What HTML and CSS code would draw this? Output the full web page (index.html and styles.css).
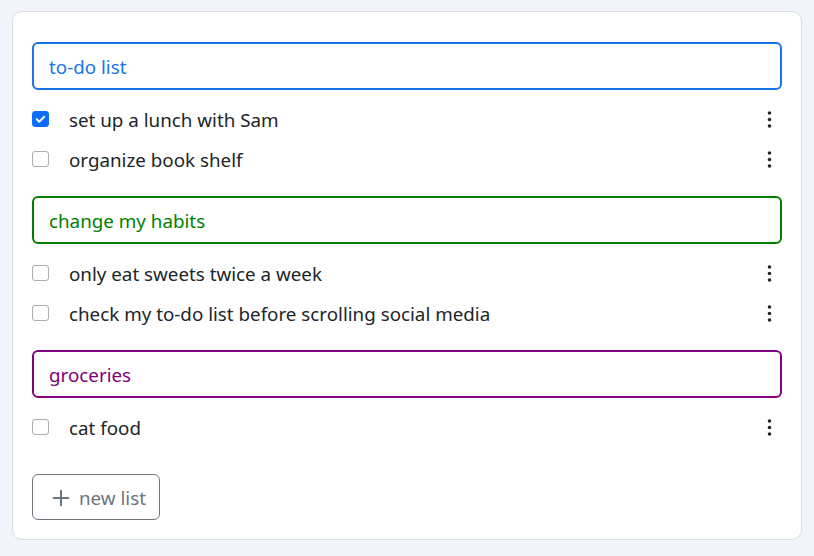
FILE: index.html
```html
<!DOCTYPE html>
<html lang="en">
<head>
<meta charset="utf-8">
<link rel="stylesheet" href="styles.css">
</head>
<body>
<div class="card">
  <section class="group">
    <div class="title title-blue">to-do list</div>
    <ul class="items">
      <li class="item"><span class="check checked"><svg viewBox="0 0 16 16" width="16" height="16"><path d="M4 8.3l2.6 2.6L12 5.6" fill="none" stroke="#fff" stroke-width="2" stroke-linecap="round" stroke-linejoin="round"/></svg></span><span class="label">set up a lunch with Sam</span><button class="kebab"><svg viewBox="0 0 16 16" width="19" height="19"><circle cx="8" cy="2.5" r="1.5"/><circle cx="8" cy="8" r="1.5"/><circle cx="8" cy="13.5" r="1.5"/></svg></button></li>
      <li class="item"><span class="check"></span><span class="label">organize book shelf</span><button class="kebab"><svg viewBox="0 0 16 16" width="19" height="19"><circle cx="8" cy="2.5" r="1.5"/><circle cx="8" cy="8" r="1.5"/><circle cx="8" cy="13.5" r="1.5"/></svg></button></li>
    </ul>
  </section>
  <section class="group">
    <div class="title title-green">change my habits</div>
    <ul class="items">
      <li class="item"><span class="check"></span><span class="label">only eat sweets twice a week</span><button class="kebab"><svg viewBox="0 0 16 16" width="19" height="19"><circle cx="8" cy="2.5" r="1.5"/><circle cx="8" cy="8" r="1.5"/><circle cx="8" cy="13.5" r="1.5"/></svg></button></li>
      <li class="item"><span class="check"></span><span class="label">check my to-do list before scrolling social media</span><button class="kebab"><svg viewBox="0 0 16 16" width="19" height="19"><circle cx="8" cy="2.5" r="1.5"/><circle cx="8" cy="8" r="1.5"/><circle cx="8" cy="13.5" r="1.5"/></svg></button></li>
    </ul>
  </section>
  <section class="group">
    <div class="title title-purple">groceries</div>
    <ul class="items">
      <li class="item"><span class="check"></span><span class="label">cat food</span><button class="kebab"><svg viewBox="0 0 16 16" width="19" height="19"><circle cx="8" cy="2.5" r="1.5"/><circle cx="8" cy="8" r="1.5"/><circle cx="8" cy="13.5" r="1.5"/></svg></button></li>
    </ul>
  </section>
  <button class="new-list"><svg viewBox="0 0 16 16" width="18" height="18"><path d="M8 1.5v13M1.5 8h13" stroke="#6c757d" stroke-width="1.8" stroke-linecap="round"/></svg><span>new list</span></button>
</div>
</body>
</html>
```

FILE: styles.css
```css
* { box-sizing: border-box; }
html, body { margin: 0; padding: 0; }
body {
  background: #f3f5fc;
  padding: 11px 12px;
  font-family: "Noto Sans", "Open Sans", sans-serif;
  color: #212529;
}
.card {
  background: #fff;
  border: 1px solid #dcdde3;
  border-radius: 10px;
  padding: 30px 19px 19px;
  display: flex;
  flex-direction: column;
  align-items: stretch;
  gap: 17px;
}
.title {
  height: 48px;
  border: 2px solid;
  border-radius: 6px;
  padding: 2px 15px 0;
  display: flex;
  align-items: center;
  font-size: 18.8px;
}
.title-blue { color: #1a73e8; border-color: #1a73e8; }
.title-green { color: #008000; border-color: #008000; }
.title-purple { color: #800080; border-color: #800080; }
.items { list-style: none; margin: 9px 0 0; padding: 0; }
.item {
  height: 40px;
  display: flex;
  align-items: center;
  font-size: 18.8px;
  line-height: 1;
}
.check {
  width: 17px;
  height: 16px;
  border: 1px solid rgba(0,0,0,.32);
  border-radius: 3px;
  flex: none;
  display: flex;
  align-items: center;
  justify-content: center;
}
.check.checked { background: #0d6efd; border-color: #0d6efd; }
.check svg { display: block; }
.label { margin-left: 20px; flex: 1; padding-top: 2px; }
.kebab {
  width: 26px;
  height: 26px;
  border: 0;
  background: none;
  padding: 0;
  display: flex;
  align-items: center;
  justify-content: center;
  fill: #212529;
}
.new-list {
  align-self: flex-start;
  margin-top: 10px;
  width: 128px;
  height: 46px;
  border: 1px solid #6c757d;
  border-radius: 6px;
  background: #fff;
  color: #6c757d;
  font-family: inherit;
  font-size: 18.8px;
  display: flex;
  align-items: center;
  gap: 9px;
  padding: 2px 0 0 19px;
}
```
